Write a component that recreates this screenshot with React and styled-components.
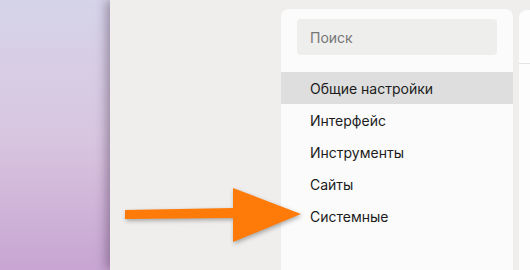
import React from "react"
import styled, { createGlobalStyle } from "styled-components"

const Global = createGlobalStyle`
	html, body {
		margin: 0;
		padding: 0;
		width: 530px;
		height: 270px;
		overflow: hidden;
	}
	body {
		font-family: Inter, "Liberation Sans", sans-serif;
	}
`

const items = ["Общие настройки", "Интерфейс", "Инструменты", "Сайты", "Системные"]

const App = () => {
	return (
		<Screen>
			<Global />
			<Desktop />
			<Window>
				<Sidebar>
					<Search placeholder="Поиск" />
					<Menu>
						{items.map((item, i) => (
							<Item key={item} active={i === 0}>
								{item}
							</Item>
						))}
					</Menu>
				</Sidebar>
				<Content>
					<ContentHeader />
				</Content>
			</Window>
			<Arrow width="190" height="70" viewBox="0 0 190 70">
				<path d="M2 26 L110 24 L110 4 L178 30 L110 58 L110 34 L2 35 Z" fill="#fe7b09" />
			</Arrow>
		</Screen>
	)
}

const Screen = styled.div`
	position: relative;
	display: flex;
	width: 530px;
	height: 270px;
	overflow: hidden;
`

const Desktop = styled.div`
	width: 110px;
	flex-shrink: 0;
	background: linear-gradient(180deg, #d6d4e9 0%, #d8c6e0 50%, #c8a5d2 100%);
`

const Window = styled.div`
	flex: 1;
	display: flex;
	gap: 6px;
	padding: 9px 0 0 171px;
	background: #efeeec;
	box-shadow: -4px 0 10px rgba(40, 20, 50, 0.35);
	z-index: 1;
`

const Sidebar = styled.div`
	width: 232px;
	flex-shrink: 0;
	background: #fbfbfb;
	border-radius: 8px 8px 0 0;
	padding-top: 10px;
	display: flex;
	flex-direction: column;
`

const Search = styled.input`
	margin: 0 16px;
	height: 36px;
	box-sizing: border-box;
	border: none;
	border-radius: 4px;
	background: #eeeeed;
	padding: 0 13px;
	font-family: Inter, "Liberation Sans", sans-serif;
	font-size: 14px;
	outline: none;

	::placeholder {
		color: #8c8c8c;
	}
`

const Menu = styled.div`
	margin-top: 17px;
	display: flex;
	flex-direction: column;
`

const Item = styled.div`
	height: 32px;
	display: flex;
	align-items: center;
	padding-left: 29px;
	font-size: 14px;
	color: #1c1c1c;
	background: ${p => (p.active ? "#dedede" : "transparent")};
`

const Content = styled.div`
	flex: 1;
	background: #fdfdfd;
	border-radius: 8px 0 0 0;
	margin-top: 1px;
`

const ContentHeader = styled.div`
	height: 53px;
	border-bottom: 1px solid #e4e4e4;
`

const Arrow = styled.svg`
	position: absolute;
	left: 123px;
	top: 184px;
	z-index: 2;
	filter: drop-shadow(1px 2px 2px rgba(0, 0, 0, 0.3));
`

export default App
